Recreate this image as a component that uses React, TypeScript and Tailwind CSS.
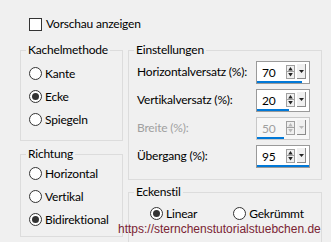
import type { ReactNode } from 'react'

const ui = { fontFamily: 'Lato, "Noto Sans", sans-serif' }
const txt = 'text-[12px] leading-[16px] tracking-[-0.2px]'

function Radio({ label, checked = false }: { label: string; checked?: boolean }) {
  return (
    <div className="flex items-center h-[23px] gap-[3px]">
      <span className="w-[13px] h-[13px] rounded-full border border-[#333] bg-white flex items-center justify-center shrink-0">
        {checked && <span className="w-[7px] h-[7px] rounded-full bg-[#333]" />}
      </span>
      <span className={`${txt} text-black whitespace-nowrap`}>{label}</span>
    </div>
  )
}

function Group({ title, className, inner, children }: { title: string; className?: string; inner?: string; children: ReactNode }) {
  return (
    <fieldset className={`min-w-0 border border-[#dcdcdc] ${className ?? ''}`}>
      <legend className={`ml-[5px] px-[2px] ${txt} text-black`}>{title}</legend>
      <div className={inner}>{children}</div>
    </fieldset>
  )
}

function Spin({ value, bar, disabled = false }: { value: string; bar: number; disabled?: boolean }) {
  const arrow = disabled ? '#b8b8b8' : '#222'
  return (
    <div className={`w-[54px] h-[23px] shrink-0 border ${disabled ? 'border-[#c8c8c8] bg-[#f7f7f7]' : 'border-[#9a9a9a] bg-white'} flex flex-col`}>
      <div className="flex items-center h-[19px] pl-[5px] pr-[3px]">
        <span className={`${txt} flex-1 pt-[3px] ${disabled ? 'text-[#a0a0a0]' : 'text-black'}`}>{value}</span>
        {/* auf/ab */}
        <span className="w-[9px] h-[14px] border border-[#a0a0a0] bg-[#f0f0f0] flex flex-col mt-[1px]">
          <svg width="7" height="6" viewBox="0 0 7 6" className="block">
            <path d="M3.5 1 L6 5 L1 5 Z" fill={arrow} />
          </svg>
          <span className="h-px bg-[#a0a0a0]" />
          <svg width="7" height="6" viewBox="0 0 7 6" className="block">
            <path d="M1 1 L6 1 L3.5 5 Z" fill={arrow} />
          </svg>
        </span>
        {/* dropdown */}
        <span className="ml-[2px] w-[9px] h-[15px] bg-[#f0f0f0] border-r border-b border-[#8a8a8a] flex items-center justify-center mt-[1px]">
          <svg width="5" height="3" viewBox="0 0 5 3">
            <path d="M0 0 L5 0 L2.5 3 Z" fill={arrow} />
          </svg>
        </span>
      </div>
      <div className="h-[3px] bg-[#0078d7]" style={{ width: bar }} />
    </div>
  )
}

function Row({ label, children, disabled = false }: { label: string; children: ReactNode; disabled?: boolean }) {
  return (
    <div className="flex items-center justify-between h-[28px]">
      <span className={`${txt} whitespace-nowrap ${disabled ? 'text-[#a0a0a0]' : 'text-black'}`}>{label}</span>
      {children}
    </div>
  )
}

export default function App() {
  return (
    <div className="w-[331px] h-[242px] bg-[#f0f0f0] relative overflow-hidden" style={ui}>
      {/* Vorschau */}
      <div className="flex items-center gap-[4px] pt-[16px] pl-[29px] h-[32px]">
        <span className="w-[13px] h-[13px] border border-[#333] bg-white" />
        <span className={`${txt} text-black`}>Vorschau anzeigen</span>
      </div>

      <div className="flex mt-[10px] pl-[20px]">
        {/* links */}
        <div className="w-[103px] flex flex-col">
          <Group title="Kachelmethode" className="h-[99px]" inner="pl-[8px] pt-[4px]">
            <Radio label="Kante" />
            <Radio label="Ecke" checked />
            <Radio label="Spiegeln" />
          </Group>
          <Group title="Richtung" className="h-[91px] mt-[5px]" inner="pl-[8px]">
            <Radio label="Horizontal" />
            <Radio label="Vertikal" />
            <Radio label="Bidirektional" checked />
          </Group>
        </div>

        {/* rechts */}
        <div className="w-[194px] ml-[5px] flex flex-col">
          <Group title="Einstellungen" className="h-[138px]" inner="pl-[8px] pr-[11px]">
            <Row label="Horizontalversatz (%):">
              <Spin value="70" bar={45} />
            </Row>
            <Row label="Vertikalversatz (%):">
              <Spin value="20" bar={32} />
            </Row>
            <Row label="Breite (%):" disabled>
              <Spin value="50" bar={27} disabled />
            </Row>
            <Row label="Übergang (%):">
              <Spin value="95" bar={52} />
            </Row>
          </Group>
          <Group title="Eckenstil" className="h-[80px] mt-[4px]" inner="pl-[21px] pt-[2px]">
            <div className="flex gap-[36px]">
              <Radio label="Linear" checked />
              <Radio label="Gekrümmt" />
            </div>
          </Group>
        </div>
      </div>

      {/* Wasserzeichen */}
      <div
        className="absolute left-[118px] top-[221px] text-[12px] leading-[16px] text-[#7a2333] whitespace-nowrap"
        style={{ fontFamily: '"Liberation Sans", Arial, sans-serif' }}
      >
        https://sternchenstutorialstuebchen.de
      </div>
    </div>
  )
}
